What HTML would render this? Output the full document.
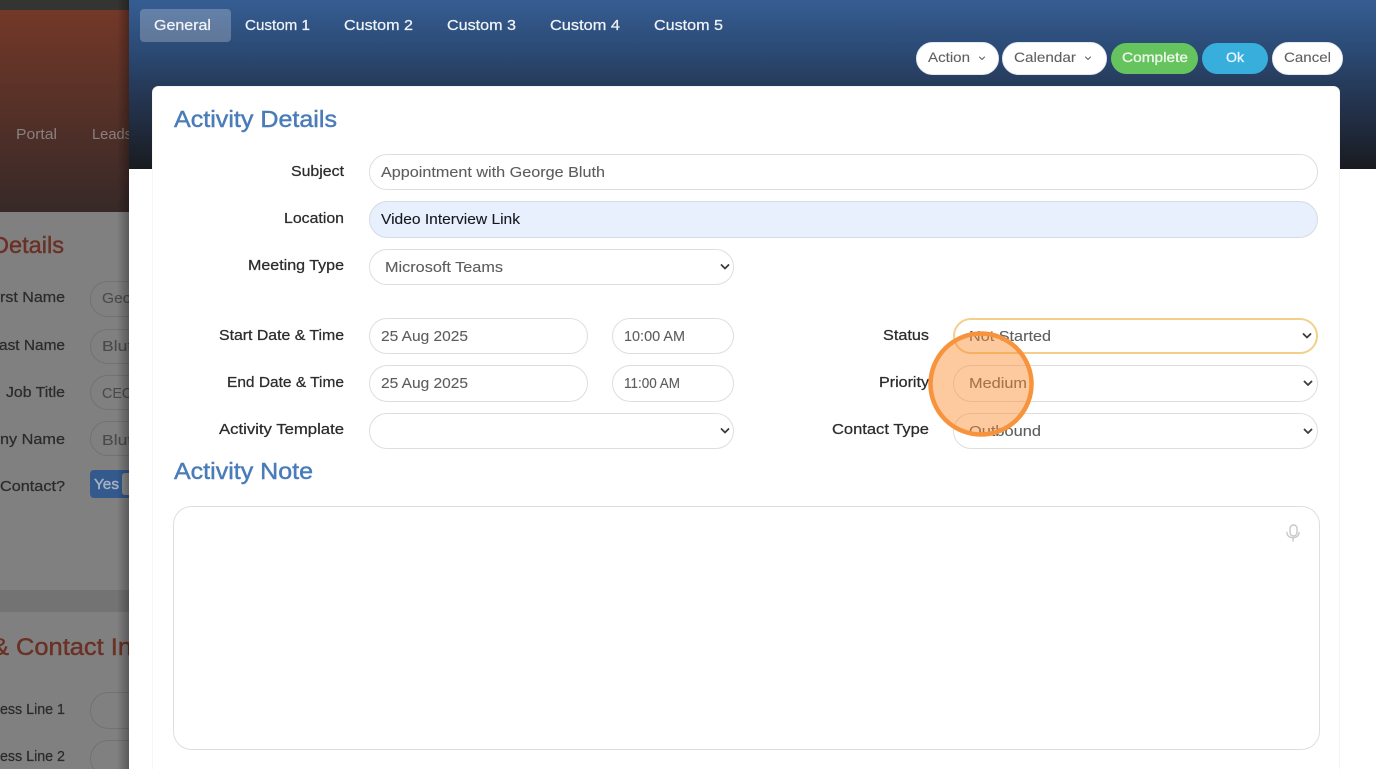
<!DOCTYPE html>
<html><head><meta charset="utf-8"><title>Activity Details</title>
<style>
html,body{margin:0;padding:0;width:1376px;height:769px;overflow:hidden;background:#fff}
svg{display:block}
text{font-family:"Liberation Sans",sans-serif}
.lab{font-size:15px;fill:#2c2c2c;stroke:#2c2c2c;stroke-width:.25px}
.val{font-size:15px;fill:#5d5d5d;stroke:#5d5d5d;stroke-width:.1px}
.tab{font-size:15px;fill:#f0f3f8;stroke:#f0f3f8;stroke-width:.25px}
.h{font-size:23px;fill:#4a7cba;stroke:#4a7cba;stroke-width:.45px}
.bg{font-size:15px;fill:#2b2b2b;stroke:#2b2b2b;stroke-width:.25px}
.bv{font-size:15px;fill:#4a4a4a;stroke:#4a4a4a;stroke-width:.1px}
.btn{font-size:14px;fill:#5f5f5f;stroke:#5f5f5f;stroke-width:.1px}
.red{fill:#6a3126;stroke:#6a3126;stroke-width:.45px}
.pill{fill:#fff;stroke:#dedede;stroke-width:1}
.chev{fill:none;stroke:#3c3c3c;stroke-width:1.800;stroke-linecap:round;stroke-linejoin:round}
.c2{fill:none;stroke:#5a5a5a;stroke-width:1;stroke-linecap:round;stroke-linejoin:round}
</style></head><body>
<svg width="1376" height="769" viewBox="0 0 1376 769" xmlns="http://www.w3.org/2000/svg">
<defs>
<linearGradient id="hero" x1="0" y1="0" x2="0" y2="1"><stop offset="0" stop-color="#733828"/><stop offset="1" stop-color="#372928"/></linearGradient>
<linearGradient id="head" x1="0" y1="0" x2="0" y2="1"><stop offset="0" stop-color="#365d93"/><stop offset=".3" stop-color="#2b4a74"/><stop offset=".6" stop-color="#24344f"/><stop offset="1" stop-color="#191b20"/></linearGradient>
<linearGradient id="sh" x1="0" y1="0" x2="1" y2="0"><stop offset="0" stop-color="#000" stop-opacity="0"/><stop offset="1" stop-color="#000" stop-opacity=".3"/></linearGradient>
</defs>

<!-- background page -->
<rect width="129" height="769" fill="#808080"/>
<rect width="129" height="10" fill="#343432"/>
<rect y="10" width="129" height="202" fill="url(#hero)"/>
<rect y="590" width="129" height="22" fill="#737373"/>
<text x="16" y="139" class="val" style="fill:#8a807d;stroke:none" textLength="41" lengthAdjust="spacingAndGlyphs">Portal</text>
<text x="92" y="139" class="val" style="fill:#8a807d;stroke:none" textLength="40" lengthAdjust="spacingAndGlyphs">Leads</text>
<text x="-8" y="253" class="red" style="font-size:23px" textLength="72" lengthAdjust="spacingAndGlyphs">Details</text>
<text x="0" y="302" class="bg" textLength="65" lengthAdjust="spacingAndGlyphs">rst Name</text>
<text x="-1" y="350" class="bg" textLength="66" lengthAdjust="spacingAndGlyphs">ast Name</text>
<text x="6" y="397" class="bg" textLength="59" lengthAdjust="spacingAndGlyphs">Job Title</text>
<text x="0" y="444" class="bg" textLength="65" lengthAdjust="spacingAndGlyphs">ny Name</text>
<text x="0" y="491" class="bg" textLength="65" lengthAdjust="spacingAndGlyphs">Contact?</text>
<rect x="90.500" y="281.500" width="80" height="35" rx="17" fill="none" stroke="#727272"/>
<rect x="90.500" y="329.500" width="80" height="34" rx="17" fill="none" stroke="#727272"/>
<rect x="90.500" y="375.500" width="80" height="34" rx="17" fill="none" stroke="#727272"/>
<rect x="90.500" y="421.500" width="80" height="34" rx="17" fill="none" stroke="#727272"/>
<text x="102" y="303" class="bv" textLength="52" lengthAdjust="spacingAndGlyphs">George</text>
<text x="102" y="351" class="bv" textLength="40" lengthAdjust="spacingAndGlyphs">Bluth</text>
<text x="102" y="398" class="bv" textLength="31" lengthAdjust="spacingAndGlyphs">CEO</text>
<text x="102" y="445" class="bv" textLength="40" lengthAdjust="spacingAndGlyphs">Bluth</text>
<rect x="90" y="470" width="50" height="28" rx="4" fill="#33598d"/>
<text x="94" y="489" style="font-size:15px;fill:#a6b3c6;stroke:#a6b3c6;stroke-width:.4px" textLength="25" lengthAdjust="spacingAndGlyphs">Yes</text>
<rect x="122" y="473" width="20" height="22" rx="3" fill="#8e8e8e"/>
<text x="-8" y="655" class="red" style="font-size:24px" textLength="140" lengthAdjust="spacingAndGlyphs">&amp; Contact In</text>
<text x="0" y="714" class="bg" textLength="65" lengthAdjust="spacingAndGlyphs">ess Line 1</text>
<text x="0" y="761" class="bg" textLength="65" lengthAdjust="spacingAndGlyphs">ess Line 2</text>
<rect x="90.500" y="692.500" width="80" height="36" rx="18" fill="none" stroke="#727272"/>
<rect x="90.500" y="740.500" width="80" height="36" rx="18" fill="none" stroke="#727272"/>
<rect x="117" width="12" height="769" fill="url(#sh)"/>

<!-- modal -->
<rect x="129" width="1247" height="769" fill="#fff"/>
<rect x="129" width="1247" height="169" fill="url(#head)"/>
<rect x="140" y="9" width="91" height="33" rx="4" fill="#fff" opacity=".24"/>
<text x="154" y="30" class="tab" textLength="57" lengthAdjust="spacingAndGlyphs">General</text>
<text x="245" y="30" class="tab" textLength="65" lengthAdjust="spacingAndGlyphs">Custom 1</text>
<text x="344" y="30" class="tab" textLength="69" lengthAdjust="spacingAndGlyphs">Custom 2</text>
<text x="447" y="30" class="tab" textLength="69" lengthAdjust="spacingAndGlyphs">Custom 3</text>
<text x="550" y="30" class="tab" textLength="70" lengthAdjust="spacingAndGlyphs">Custom 4</text>
<text x="654" y="30" class="tab" textLength="69" lengthAdjust="spacingAndGlyphs">Custom 5</text>

<!-- buttons -->
<rect x="916.500" y="42.500" width="82" height="32" rx="16" fill="#fff" stroke="#e2e8f1"/>
<text x="928" y="62" class="btn" textLength="42" lengthAdjust="spacingAndGlyphs">Action</text>
<path class="c2" d="M979.500 57l2.500 2.500 2.500-2.500"/>
<rect x="1002.500" y="42.500" width="104" height="32" rx="16" fill="#fff" stroke="#e2e8f1"/>
<text x="1014" y="62" class="btn" textLength="62" lengthAdjust="spacingAndGlyphs">Calendar</text>
<path class="c2" d="M1085.500 57l2.500 2.500 2.500-2.500"/>
<rect x="1111" y="43" width="87" height="31" rx="15.500" fill="#66c45f"/>
<text x="1122" y="62" style="font-size:14px;fill:#eef8ec;stroke:#eef8ec;stroke-width:.3px" textLength="66" lengthAdjust="spacingAndGlyphs">Complete</text>
<rect x="1202" y="43" width="66" height="31" rx="15.500" fill="#38aedd"/>
<text x="1226" y="62" style="font-size:14px;fill:#eaf6fb;stroke:#eaf6fb;stroke-width:.3px" textLength="18" lengthAdjust="spacingAndGlyphs">Ok</text>
<rect x="1272.500" y="42.500" width="70" height="32" rx="16" fill="#fff" stroke="#e2e8f1"/>
<text x="1284" y="62" class="btn" textLength="47" lengthAdjust="spacingAndGlyphs">Cancel</text>

<!-- card -->
<rect x="152.500" y="86.500" width="1187" height="720" rx="6" fill="#fff" stroke="#f5f5f5"/>
<text x="174" y="127" class="h" textLength="163" lengthAdjust="spacingAndGlyphs">Activity Details</text>

<text x="291" y="176" class="lab" textLength="53" lengthAdjust="spacingAndGlyphs">Subject</text>
<text x="284" y="223" class="lab" textLength="60" lengthAdjust="spacingAndGlyphs">Location</text>
<text x="248" y="270" class="lab" textLength="96" lengthAdjust="spacingAndGlyphs">Meeting Type</text>
<text x="219" y="340" class="lab" textLength="125" lengthAdjust="spacingAndGlyphs">Start Date &amp; Time</text>
<text x="227" y="387" class="lab" textLength="117" lengthAdjust="spacingAndGlyphs">End Date &amp; Time</text>
<text x="219" y="434" class="lab" textLength="125" lengthAdjust="spacingAndGlyphs">Activity Template</text>
<text x="883" y="340" class="lab" textLength="46" lengthAdjust="spacingAndGlyphs">Status</text>
<text x="879" y="387" class="lab" textLength="50" lengthAdjust="spacingAndGlyphs">Priority</text>
<text x="832" y="434" class="lab" textLength="97" lengthAdjust="spacingAndGlyphs">Contact Type</text>

<rect class="pill" x="369.500" y="154.500" width="948" height="35" rx="17.500"/>
<text x="381" y="177" class="val" textLength="224" lengthAdjust="spacingAndGlyphs">Appointment with George Bluth</text>
<rect x="369.500" y="201.500" width="948" height="36" rx="18" fill="#e8f0fe" stroke="#d5dbe4"/>
<text x="381" y="224" class="val" style="fill:#16181d;stroke:#16181d" textLength="139" lengthAdjust="spacingAndGlyphs">Video Interview Link</text>
<rect class="pill" x="369.500" y="249.500" width="364" height="35" rx="17.500"/>
<text x="385" y="272" class="val" textLength="118" lengthAdjust="spacingAndGlyphs">Microsoft Teams</text>
<path class="chev" d="M721.500 265l3.500 3.500 3.500-3.500"/>

<rect class="pill" x="369.500" y="318.500" width="218" height="35" rx="17.500"/>
<text x="381" y="341" class="val" textLength="87" lengthAdjust="spacingAndGlyphs">25 Aug 2025</text>
<rect class="pill" x="612.500" y="318.500" width="121" height="35" rx="17.500"/>
<text x="624" y="341" class="val" textLength="61" lengthAdjust="spacingAndGlyphs">10:00 AM</text>
<rect class="pill" x="369.500" y="365.500" width="218" height="36" rx="18"/>
<text x="381" y="388" class="val" textLength="87" lengthAdjust="spacingAndGlyphs">25 Aug 2025</text>
<rect class="pill" x="612.500" y="365.500" width="121" height="36" rx="18"/>
<text x="624" y="388" class="val" textLength="56" lengthAdjust="spacingAndGlyphs">11:00 AM</text>
<rect class="pill" x="369.500" y="413.500" width="364" height="35" rx="17.500"/>
<path class="chev" d="M721.500 429l3.500 3.500 3.500-3.500"/>

<rect x="954" y="319" width="363" height="34" rx="17" fill="#fff" stroke="#f3cf8b" stroke-width="2"/>
<text x="969" y="341" class="val" textLength="82" lengthAdjust="spacingAndGlyphs">Not Started</text>
<path class="chev" d="M1303.500 334l3.500 3.500 3.500-3.500"/>
<rect class="pill" x="953.500" y="365.500" width="364" height="36" rx="18"/>
<text x="969" y="388" class="val" textLength="58" lengthAdjust="spacingAndGlyphs">Medium</text>
<path class="chev" d="M1304.500 381.500l3.500 3.500 3.500-3.500"/>
<rect class="pill" x="953.500" y="413.500" width="364" height="35" rx="17.500"/>
<text x="969" y="436" class="val" textLength="72" lengthAdjust="spacingAndGlyphs">Outbound</text>
<path class="chev" d="M1304.500 429.500l3.500 3.500 3.500-3.500"/>

<text x="174" y="479" class="h" textLength="139" lengthAdjust="spacingAndGlyphs">Activity Note</text>
<rect class="pill" x="173.500" y="506.500" width="1146" height="243" rx="18"/>
<g fill="none" stroke="#c8c8c8" stroke-width="1.400" stroke-linecap="round">
<rect x="1290" y="525" width="7" height="11" rx="3.500"/>
<path d="M1287 532.500c0 7 12 7 12 0M1293 538v3"/>
</g>

<!-- highlight -->
<circle cx="981" cy="384" r="50.500" fill="#fb8c30" fill-opacity=".47" stroke="#f7933c" stroke-width="4.500"/>
</svg>
</body></html>
